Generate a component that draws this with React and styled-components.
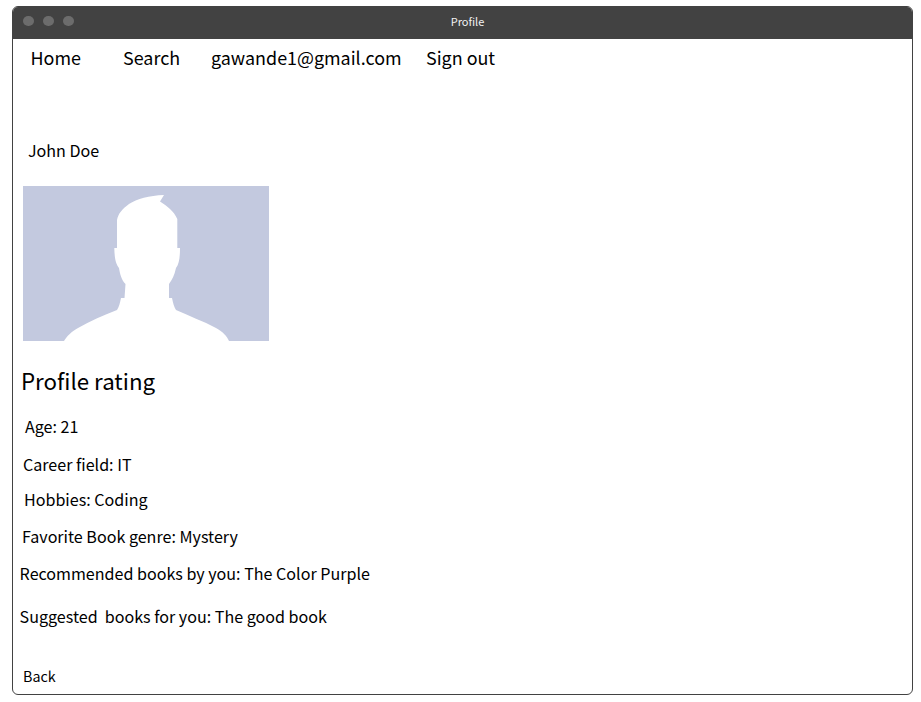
import React from "react";
import styled, { createGlobalStyle } from "styled-components";

const GlobalStyle = createGlobalStyle`
  *, *::before, *::after { box-sizing: border-box; }
  body {
    margin: 0;
    background: #fff;
    color: #000;
    font-family: "Noto Sans CJK SC", "Noto Sans", sans-serif;
  }
`;

const Window = styled.div`
  width: 901px;
  height: 689px;
  margin: 6px 0 0 12px;
  border: 1px solid #424242;
  border-radius: 6px;
  overflow: hidden;
  background: #fff;
`;

const TitleBar = styled.header`
  display: grid;
  grid-template-columns: 1fr auto 1fr;
  align-items: center;
  height: 32px;
  padding: 0 10px;
  background: #424242;
`;

const Lights = styled.div`
  display: flex;
  gap: 10px;
  margin-top: -4px;
`;

const Light = styled.span`
  width: 10.5px;
  height: 10px;
  margin-right: -0.5px;
  border-radius: 50%;
  background: #6c6c6c;
`;

const Title = styled.h1`
  margin: -4px 0 0 10px;
  font-size: 11px;
  font-weight: 400;
  line-height: 16px;
  color: #f2f2f2;
`;

const Nav = styled.nav`
  display: grid;
  grid-template-columns: 92.5px 88px 215px auto;
  height: 40px;
  padding-left: 17.5px;
`;

const NavLink = styled.a`
  font-size: 17.92px;
  line-height: 36px;
  white-space: nowrap;
  color: #000;
  text-decoration: none;
`;

const Line = styled.p`
  margin: ${(p) => p.$gap}px 0 0 ${(p) => p.$indent}px;
  font-size: 16.08px;
  line-height: 24px;
  white-space: pre;
`;

const Heading = styled.h2`
  margin: 23px 0 0 8px;
  font-size: 22.3px;
  font-weight: 400;
  line-height: 32px;
`;

const Avatar = styled.svg`
  display: block;
  width: 246px;
  height: 155px;
  margin: 24px 0 0 10px;
  background: #c3c9df;
`;

const Back = styled.a`
  display: block;
  margin: 36px 0 0 10px;
  font-size: 14.3px;
  line-height: 24px;
`;

const links = ["Home", "Search", "gawande1@gmail.com", "Sign out"];

const details = [
  { text: "Age: 21", gap: 18, indent: 12 },
  { text: "Career field: IT", gap: 14, indent: 10 },
  { text: "Hobbies: Coding", gap: 11, indent: 11 },
  { text: "Favorite Book genre: Mystery", gap: 13, indent: 9 },
  { text: "Recommended books by you: The Color Purple", gap: 13, indent: 6.6 },
  { text: "Suggested  books for you: The good book", gap: 19, indent: 6.6 },
];

export default function App() {
  return (
    <>
      <GlobalStyle />
      <Window>
        <TitleBar>
          <Lights>
            <Light />
            <Light />
            <Light />
          </Lights>
          <Title>Profile</Title>
        </TitleBar>
        <Nav>
          {links.map((label) => (
            <NavLink key={label}>{label}</NavLink>
          ))}
        </Nav>
        <main>
          <Line $gap={59} $indent={15}>John Doe</Line>
          <Avatar viewBox="0 0 246 155" role="img" aria-label="John Doe">
            <path
              fill="#fff"
              d="M41 155C44 150 48 146 55 142C67 135 81 129 94 124C96 121 97 117 98 112H101.500L102.500 98C98.500 94 97 88 96 82C93 78 91.500 73 91.300 62H94V34C95 28 99 23 106 18C114 13 126 9.500 141 9L137 15.500C144 20 151 25 154.300 33V62H157C157 72 156 78 153 82C151.500 89 149 94 146 98V112H149C150 117 151 121 153 124C166 130 180 135 193 142C200 146 204 150 206 155Z"
            />
          </Avatar>
          <Heading>Profile rating</Heading>
          {details.map((d) => (
            <Line key={d.text} $gap={d.gap} $indent={d.indent}>
              {d.text}
            </Line>
          ))}
          <Back>Back</Back>
        </main>
      </Window>
    </>
  );
}
